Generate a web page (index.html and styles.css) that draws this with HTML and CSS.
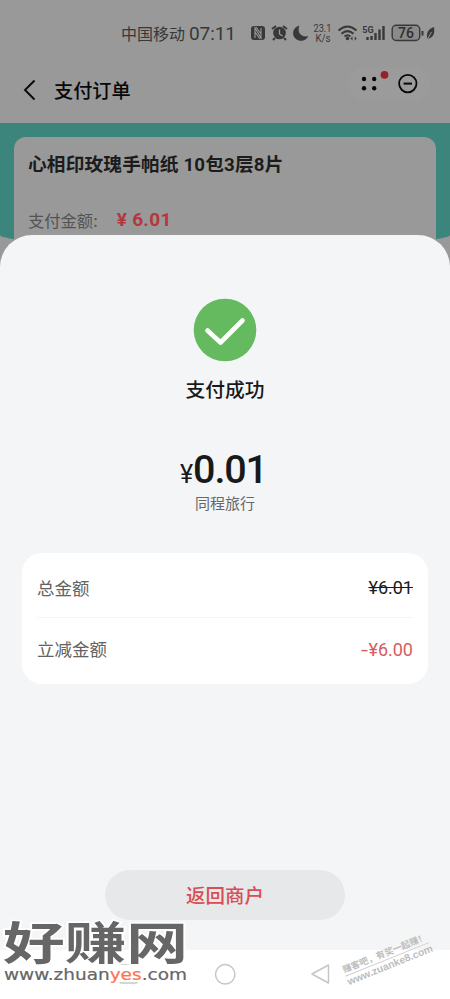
FILE: index.html
```html
<!DOCTYPE html>
<html lang="zh-CN">
<head>
    <meta charset="UTF-8">
    <meta name="viewport" content="width=device-width, initial-scale=1.0">
    <title>支付订单</title>
    <link rel="stylesheet" href="styles.css">
</head>
<body>
<div class="page">
    <div class="status-bar">
        <span class="carrier">中国移动</span>
        <span class="time">07:11</span>
        <svg class="status-icons" width="186" height="22" viewBox="250 22 186 22">
            <!-- nfc -->
            <rect x="251" y="26" width="14" height="14" rx="3" fill="#383838"/>
            <path d="M255 38V28l6 10V28M255 32l5 7M256 27l5 7" fill="none" stroke="#999" stroke-width="1.1"/>
            <!-- alarm -->
            <circle cx="279.500" cy="33" r="6.300" fill="#383838"/>
            <path d="M272 29l4-3M283 26l4 3M275 38l-2 2M284 38l2 2" stroke="#383838" stroke-width="2"/>
            <path d="M279.500 29.500V34l3 2" fill="none" stroke="#999" stroke-width="1.300"/>
            <!-- moon -->
            <path d="M299 26C291 28 291.500 40 301 40.500C304 40.500 306.500 39 307.800 36.500C301 38 296.500 32 299 26z" fill="#383838" stroke="#383838" stroke-width=".6"/>
            <text class="speed" x="322.500" y="32" textLength="18" lengthAdjust="spacingAndGlyphs">23.1</text>
            <text class="speed" x="323" y="42" textLength="15" lengthAdjust="spacingAndGlyphs">K/s</text>
            <!-- wifi -->
            <path d="M338.500 30.500q9-8 18 0M341.500 33.800q6-5.300 12 0M344.500 36.500q3-2.500 6 0" fill="none" stroke="#383838" stroke-width="2"/>
            <circle cx="347.500" cy="38.500" r="1.800" fill="#383838"/>
            <path d="M350.500 38.500l2-2v4zM356.700 38.500l-2-2v4z" fill="#383838"/>
            <!-- signal -->
            <text class="net" x="368" y="32.500">5G</text>
            <path d="M367.500 40v-3M371.500 40v-4M375.500 40v-7M379.500 40V29.500M383.500 40V26" stroke="#383838" stroke-width="2.400"/>
            <!-- battery -->
            <rect x="392.200" y="25.200" width="27.500" height="15.300" rx="4" fill="#8a8a8a" stroke="#383838" stroke-width="1.400"/>
            <path d="M422.500 31v4.500" stroke="#383838" stroke-width="2"/>
            <text class="battery" x="406" y="38">76</text>
            <path d="M427.500 39c-1.500-5 0-10 6.500-12 1 6-.5 10-5 11.500z" fill="#383838"/>
            <path d="M427 40l4.500-8" stroke="#999"/>
        </svg>
    </div>

    <div class="nav-bar">
        <svg class="back" width="14" height="22" viewBox="0 0 14 22">
            <path d="M11.500 1.500L2 11l9.500 9.500" fill="none" stroke="#080808" stroke-width="1.900"/>
        </svg>
        <h1>支付订单</h1>
        <div class="capsule">
            <svg width="82" height="34" viewBox="348 67 82 34">
                <g fill="#080808">
                    <circle cx="364" cy="79" r="2.200"/>
                    <circle cx="374.200" cy="79" r="2.200"/>
                    <circle cx="364" cy="88.300" r="2.200"/>
                    <circle cx="374.200" cy="88.300" r="2.200"/>
                </g>
                <circle cx="384.500" cy="74.800" r="3.900" fill="#98202a"/>
                <circle cx="407.800" cy="83.600" r="8.700" fill="none" stroke="#080808" stroke-width="1.800"/>
                <path d="M403.600 83.600h8.400" stroke="#080808" stroke-width="2"/>
            </svg>
        </div>
    </div>

    <div class="banner">
        <div class="order-card">
            <h2>心相印玫瑰手帕纸 10包3层8片</h2>
            <div class="order-price">
                <span class="label">支付金额:</span>
                <strong>¥ 6.01</strong>
            </div>
        </div>
    </div>

    <div class="sheet">
        <svg class="success-icon" width="64" height="64" viewBox="0 0 64 64">
            <circle cx="32" cy="32" r="31.300" fill="#65b95e"/>
            <path d="M14.500 32.500L27.500 44.500L49.500 22.500" fill="none" stroke="#fff" stroke-width="4.600" stroke-linecap="round" stroke-linejoin="round"/>
        </svg>
        <div class="result">支付成功</div>
        <div class="amount"><span class="yen">¥</span>0.01</div>
        <div class="merchant">同程旅行</div>

        <div class="detail">
            <div class="detail-row">
                <span>总金额</span>
                <span class="price total">¥6.01</span>
            </div>
            <div class="detail-row">
                <span>立减金额</span>
                <span class="price discount"><span class="minus">-</span>¥6.00</span>
            </div>
        </div>

        <button class="return-btn">返回商户</button>
    </div>

    <div class="system-nav">
        <svg width="450" height="49" viewBox="0 950 450 49">
            <g fill="none" stroke="#c6c6c6" stroke-width="1.500">
                <rect x="120" y="965" width="17" height="18" rx="1"/>
                <circle cx="225.200" cy="974.300" r="9.700"/>
                <path d="M328.500 965v18l-16.500-9z" stroke-linejoin="round"/>
            </g>
        </svg>
    </div>

    <svg class="logo" width="196" height="104" viewBox="0 895 196 104">
        <rect x="3" y="965" width="186" height="17" fill="#fff"/>
        <g transform="translate(0 959.500) scale(1 .76)">
            <text class="logo-name" x="3" y="0" textLength="185" lengthAdjust="spacingAndGlyphs">好赚网</text>
        </g>
        <text class="logo-url" x="4" y="980" textLength="183" lengthAdjust="spacingAndGlyphs">www.zhuan<tspan class="yes">yes</tspan>.com</text>
    </svg>

    <div class="stamp">
        <span>赚客吧，有奖一起赚！</span>
        <span class="stamp-url">www.zuanke8.com</span>
    </div>
</div>
</body>
</html>
```
FILE: styles.css
```css
* {
    box-sizing: border-box;
}
body {
    margin: 0;
    font-family: "Noto Sans CJK SC", sans-serif;
    background: #999;
}
.page {
    position: relative;
    display: flex;
    flex-direction: column;
    width: 450px;
    height: 999px;
    overflow: hidden;
    background: #999;
}
h1, h2 {
    margin: 0;
}
.status-bar {
    display: flex;
    align-items: center;
    height: 66px;
    padding-left: 121px;
    color: #383838;
}
.carrier {
    width: 68px;
    font-size: 16px;
    line-height: 20px;
}
.time {
    width: 61px;
    padding-top: 2px;
    font-family: Roboto, sans-serif;
    font-size: 19px;
    line-height: 20px;
    letter-spacing: -0.1px;
}
.speed {
    font: 10.5px Roboto, sans-serif;
    text-anchor: middle;
    fill: #383838;
}
.net {
    font: bold 9px Roboto, sans-serif;
    text-anchor: middle;
    fill: #383838;
}
.battery {
    font: 500 14px Roboto, sans-serif;
    text-anchor: middle;
    fill: #303030;
}
.nav-bar {
    display: flex;
    align-items: center;
    height: 57px;
    padding: 0 20px 10px 23px;
}
.back {
    margin-top: 1px;
}
.nav-bar h1 {
    margin: 0 0 0 17px;
    color: #080808;
    font-size: 19.2px;
    font-weight: 500;
    line-height: 28px;
}
.capsule {
    height: 34px;
    margin: -11px 0 0 auto;
    border-radius: 17px;
    background: #9b9b9b;
}
.banner {
    height: 124px;
    padding: 14px 14px 0;
    border-radius: 0 0 225px 225px / 0 0 12px 12px;
    background: #3c857c;
}
.order-card {
    height: 108px;
    padding: 15px 14px 0;
    border-radius: 12px 12px 0 0;
    background: #999;
}
.order-card h2 {
    color: #1c1c1c;
    font-family: Roboto, "Noto Sans CJK SC", sans-serif;
    font-size: 18.7px;
    font-weight: 700;
    line-height: 27px;
    letter-spacing: 0.15px;
    white-space: nowrap;
}
.order-price {
    display: flex;
    align-items: center;
    gap: 19px;
    margin-top: 28px;
    line-height: 26px;
}
.order-price .label {
    color: #535353;
    font-size: 16.3px;
}
.order-price strong {
    color: #b3383e;
    font-family: Roboto, sans-serif;
    font-size: 19px;
    letter-spacing: 0.3px;
}
/* bottom sheet over the order page */
.sheet {
    position: absolute;
    top: 235px;
    left: 0;
    display: flex;
    flex-direction: column;
    align-items: center;
    width: 450px;
    height: 715px;
    padding-top: 63px;
    border-radius: 32px 32px 0 0;
    background: #f4f5f7;
}
.result {
    height: 30px;
    margin-top: 12px;
    color: #18191b;
    font-size: 19.8px;
    font-weight: 500;
    line-height: 30px;
}
.amount {
    height: 54px;
    margin-top: 38px;
    padding-right: 3px;
    color: #18191b;
    font-family: Roboto, sans-serif;
    font-size: 39.5px;
    font-weight: 500;
    line-height: 56px;
    letter-spacing: -1.1px;
}
.yen {
    margin-right: 1px;
    font-size: 25px;
    font-weight: 400;
}
.merchant {
    height: 22px;
    margin-top: -4px;
    color: #66676a;
    font-size: 15px;
    line-height: 22px;
}
.detail {
    width: 406px;
    height: 131px;
    margin-top: 39px;
    padding: 4px 15px;
    border-radius: 20px;
    background: #fff;
}
.detail-row {
    display: flex;
    align-items: center;
    justify-content: space-between;
    height: 61px;
    color: #626262;
    font-size: 17.5px;
}
.detail-row:first-child {
    border-bottom: 1px solid #f4f4f4;
}
.price {
    padding-top: 1px;
    font-family: Roboto, sans-serif;
    font-size: 18px;
}
.detail-row .total {
    color: #1b1b1b;
    text-decoration: line-through;
}
.detail-row .discount {
    color: #d65c61;
}
.minus {
    display: inline-block;
    margin-right: 1px;
    transform: scaleX(1.4);
}
.return-btn {
    width: 240px;
    height: 50px;
    margin-top: 186px;
    padding-bottom: 3px;
    border: none;
    border-radius: 25px;
    background: #e6e8e9;
    color: #d84e55;
    font-family: inherit;
    font-size: 19.5px;
    font-weight: 500;
}
.system-nav {
    height: 49px;
    margin-top: auto;
    background: #fff;
}
/* watermarks */
.logo {
    position: absolute;
    left: 0;
    top: 895px;
}
.logo-name {
    font-size: 60px;
    font-weight: 700;
    fill: #666;
    stroke: #fff;
    stroke-width: 4px;
    paint-order: stroke;
}
.logo-url {
    font: 15.5px "DejaVu Sans", sans-serif;
    fill: #666;
    stroke: #666;
    stroke-width: 0.2px;
}
.logo-url .yes {
    fill: #ff7350;
    stroke: #ff7350;
}
.stamp {
    position: absolute;
    left: 342px;
    top: 946px;
    display: flex;
    flex-direction: column;
    width: 90px;
    color: #bdbdbd;
    font-size: 9px;
    font-weight: 700;
    line-height: 13px;
    white-space: nowrap;
    transform: rotate(-22deg);
}
.stamp-url {
    border-top: 1px solid #d0d0d0;
    font: bold 10.3px/12px "Liberation Sans", sans-serif;
}
```
